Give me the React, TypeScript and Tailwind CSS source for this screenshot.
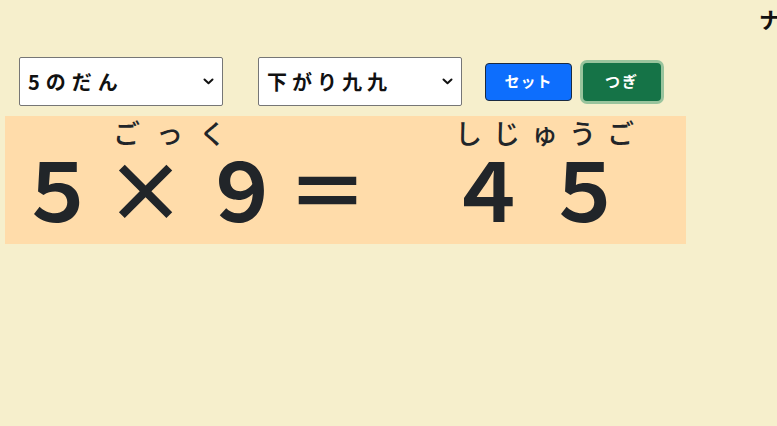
import React from "react";

const jp = "font-['Noto_Sans_CJK_JP','Noto_Sans',sans-serif]";

function Chevron() {
  return (
    <svg width="11" height="7" viewBox="0 0 11 7" className="shrink-0">
      <path d="M1.5 1.5 L5.5 5.2 L9.5 1.5" fill="none" stroke="#111" strokeWidth="2" strokeLinecap="round" strokeLinejoin="round" />
    </svg>
  );
}

function Select({ label, tracking }: { label: string; tracking: string }) {
  return (
    <div className="w-[204px] h-[49px] flex items-center justify-between bg-white border border-[#767676] rounded-[2px] pl-[8px] pr-[8px]">
      <span className={`text-[20px] font-bold ${tracking} text-[#111] leading-none`}>{label}</span>
      <Chevron />
    </div>
  );
}

export default function App() {
  return (
    <div className={`w-[777px] h-[426px] overflow-hidden bg-[#f6efcc] ${jp} text-[#212529]`}>
      <div className="h-[40px] pl-[759px] pt-[3px] whitespace-nowrap text-[22px] font-bold text-[#111] leading-[30px]">
        ナ
      </div>
      <div className="flex items-center pl-[19px] pt-[17px]">
        <Select label="5のだん" tracking="tracking-[6px]" />
        <div className="w-[35px]" />
        <Select label="下がり九九" tracking="tracking-[5px]" />
        <div className="w-[23px]" />
        <div className="w-[87px] h-[38px] flex items-center justify-center rounded-[4px] bg-[#0d6efd] border border-[#1a2a40] text-white text-[15px] font-bold tracking-[1px]">
          セット
        </div>
        <div className="w-[11px]" />
        <div className="w-[78px] h-[38px] flex items-center justify-center rounded-[4px] bg-[#157347] text-white text-[15px] font-bold tracking-[2px] shadow-[0_0_0_3px_rgba(60,153,110,0.5)]">
          つぎ
        </div>
      </div>
      <div className="ml-[5px] mt-[10px] w-[681px] h-[128px] bg-[#ffdcaa]">
        <div className="flex items-start pl-[12px] pt-[2px]">
          <div className="flex flex-col">
            <div className="pl-[96px] text-[27px] tracking-[16px] leading-[30px] h-[30px] font-medium whitespace-nowrap">ごっく</div>
            <div className="flex items-center h-[76px] text-[81px] font-bold leading-none">
              <span className="w-[88px]">５</span>
              <span className="w-[96px]">×</span>
              <span className="w-[86px]">９</span>
              <span className="w-[90px]">＝</span>
            </div>
          </div>
          <div className="flex flex-col ml-[70px]">
            <div className="pl-[8px] text-[27px] tracking-[11px] leading-[30px] h-[30px] font-medium whitespace-nowrap">しじゅうご</div>
            <div className="flex items-center h-[76px] text-[81px] font-bold leading-none">
              <span className="w-[97px]">４</span>
              <span className="w-[90px]">５</span>
            </div>
          </div>
        </div>
      </div>
    </div>
  );
}
